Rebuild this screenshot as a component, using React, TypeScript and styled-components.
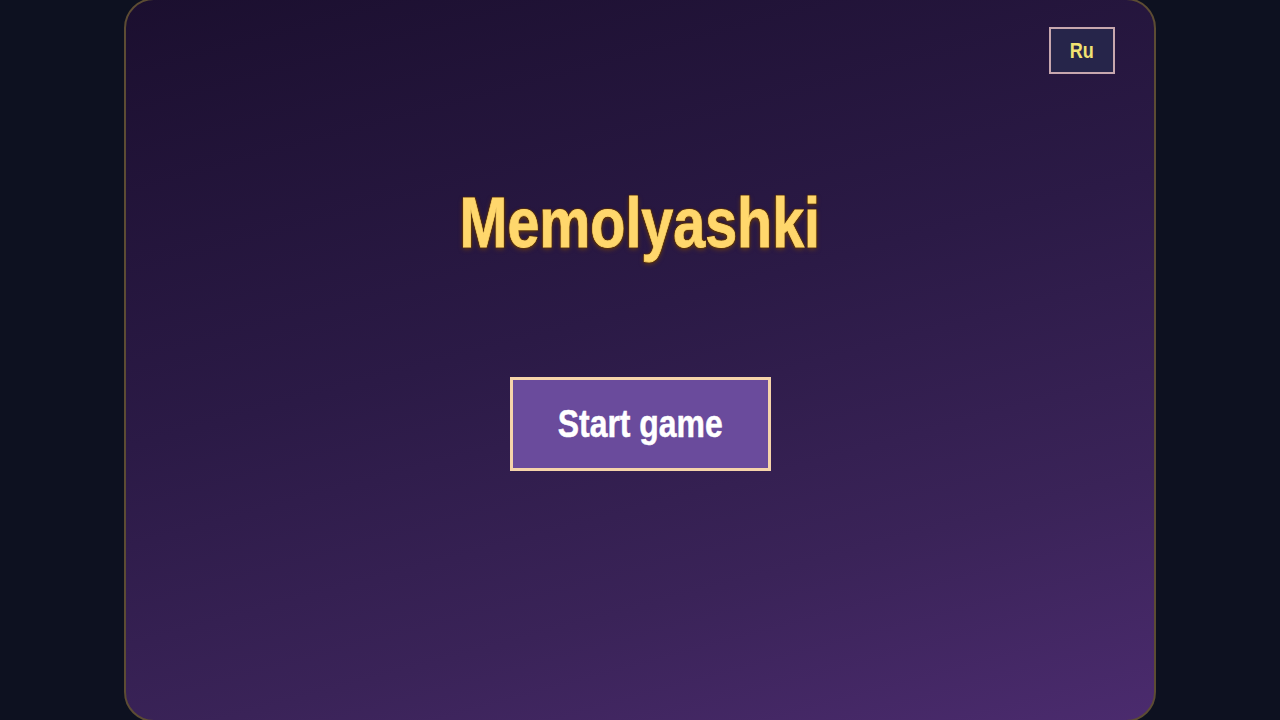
import styled, { createGlobalStyle } from "styled-components";

const GlobalStyle = createGlobalStyle`
  html, body {
    margin: 0;
    padding: 0;
    height: 100%;
    overflow: hidden;
    background: #0d1120;
  }
  #root {
    height: 100%;
  }
`;

const Page = styled.div`
  height: 100%;
  display: flex;
  justify-content: center;
  background: #0d1120;
`;

const Card = styled.div`
  width: 1032px;
  height: calc(100vh + 4px);
  margin-top: -2px;
  box-sizing: border-box;
  border: 2px solid #5c4c33;
  border-radius: 30px;
  background: linear-gradient(165deg, #1b0f2f 0%, #2b1a46 45%, #3a2358 75%, #4b2b6e 100%);
  display: flex;
  flex-direction: column;
  align-items: center;
  font-family: "Liberation Sans Narrow", "Liberation Sans", Arial, sans-serif;
`;

// no narrow face installed, so squeeze the regular one
const Narrow = styled.span<{ $ratio?: number }>`
  display: inline-block;
  transform: scaleX(${(p) => p.$ratio ?? 0.82});
`;

const TopBar = styled.div`
  align-self: stretch;
  display: flex;
  justify-content: flex-end;
  padding: 27px 39px 0;
`;

const LangButton = styled.button`
  width: 66px;
  height: 47px;
  box-sizing: border-box;
  border: 2px solid #c7a7ae;
  background: #26254a;
  color: #f1e272;
  font-family: inherit;
  font-weight: 700;
  font-size: 22px;
  padding: 0;
  cursor: pointer;
`;

const Title = styled.h1`
  margin: 107px 0 0;
  font-size: 70px;
  line-height: 84px;
  font-weight: 700;
  color: #ffd76c;
  -webkit-text-stroke: 0.8px #ffd76c;
  text-shadow: 0 0 2px #5a3208, 1px 1px 1px #5a3208, -1px -1px 1px #5a3208,
    1px -1px 1px #5a3208, -1px 1px 1px #5a3208, 0 2px 6px rgba(120, 70, 10, 0.8);
`;

const StartButton = styled.button`
  margin-top: 112px;
  width: 261px;
  height: 94px;
  box-sizing: border-box;
  border: 3px solid #f6d4aa;
  background: #6a4b9c;
  color: #ffffff;
  -webkit-text-stroke: 0.5px #ffffff;
  font-family: inherit;
  font-weight: 700;
  font-size: 38px;
  padding: 0;
  cursor: pointer;
`;

export default function App() {
  return (
    <>
      <GlobalStyle />
      <Page>
        <Card>
          <TopBar>
            <LangButton>
              <Narrow>Ru</Narrow>
            </LangButton>
          </TopBar>
          <Title>
            <Narrow>Memolyashki</Narrow>
          </Title>
          <StartButton>
            <Narrow $ratio={0.84}>Start game</Narrow>
          </StartButton>
        </Card>
      </Page>
    </>
  );
}
